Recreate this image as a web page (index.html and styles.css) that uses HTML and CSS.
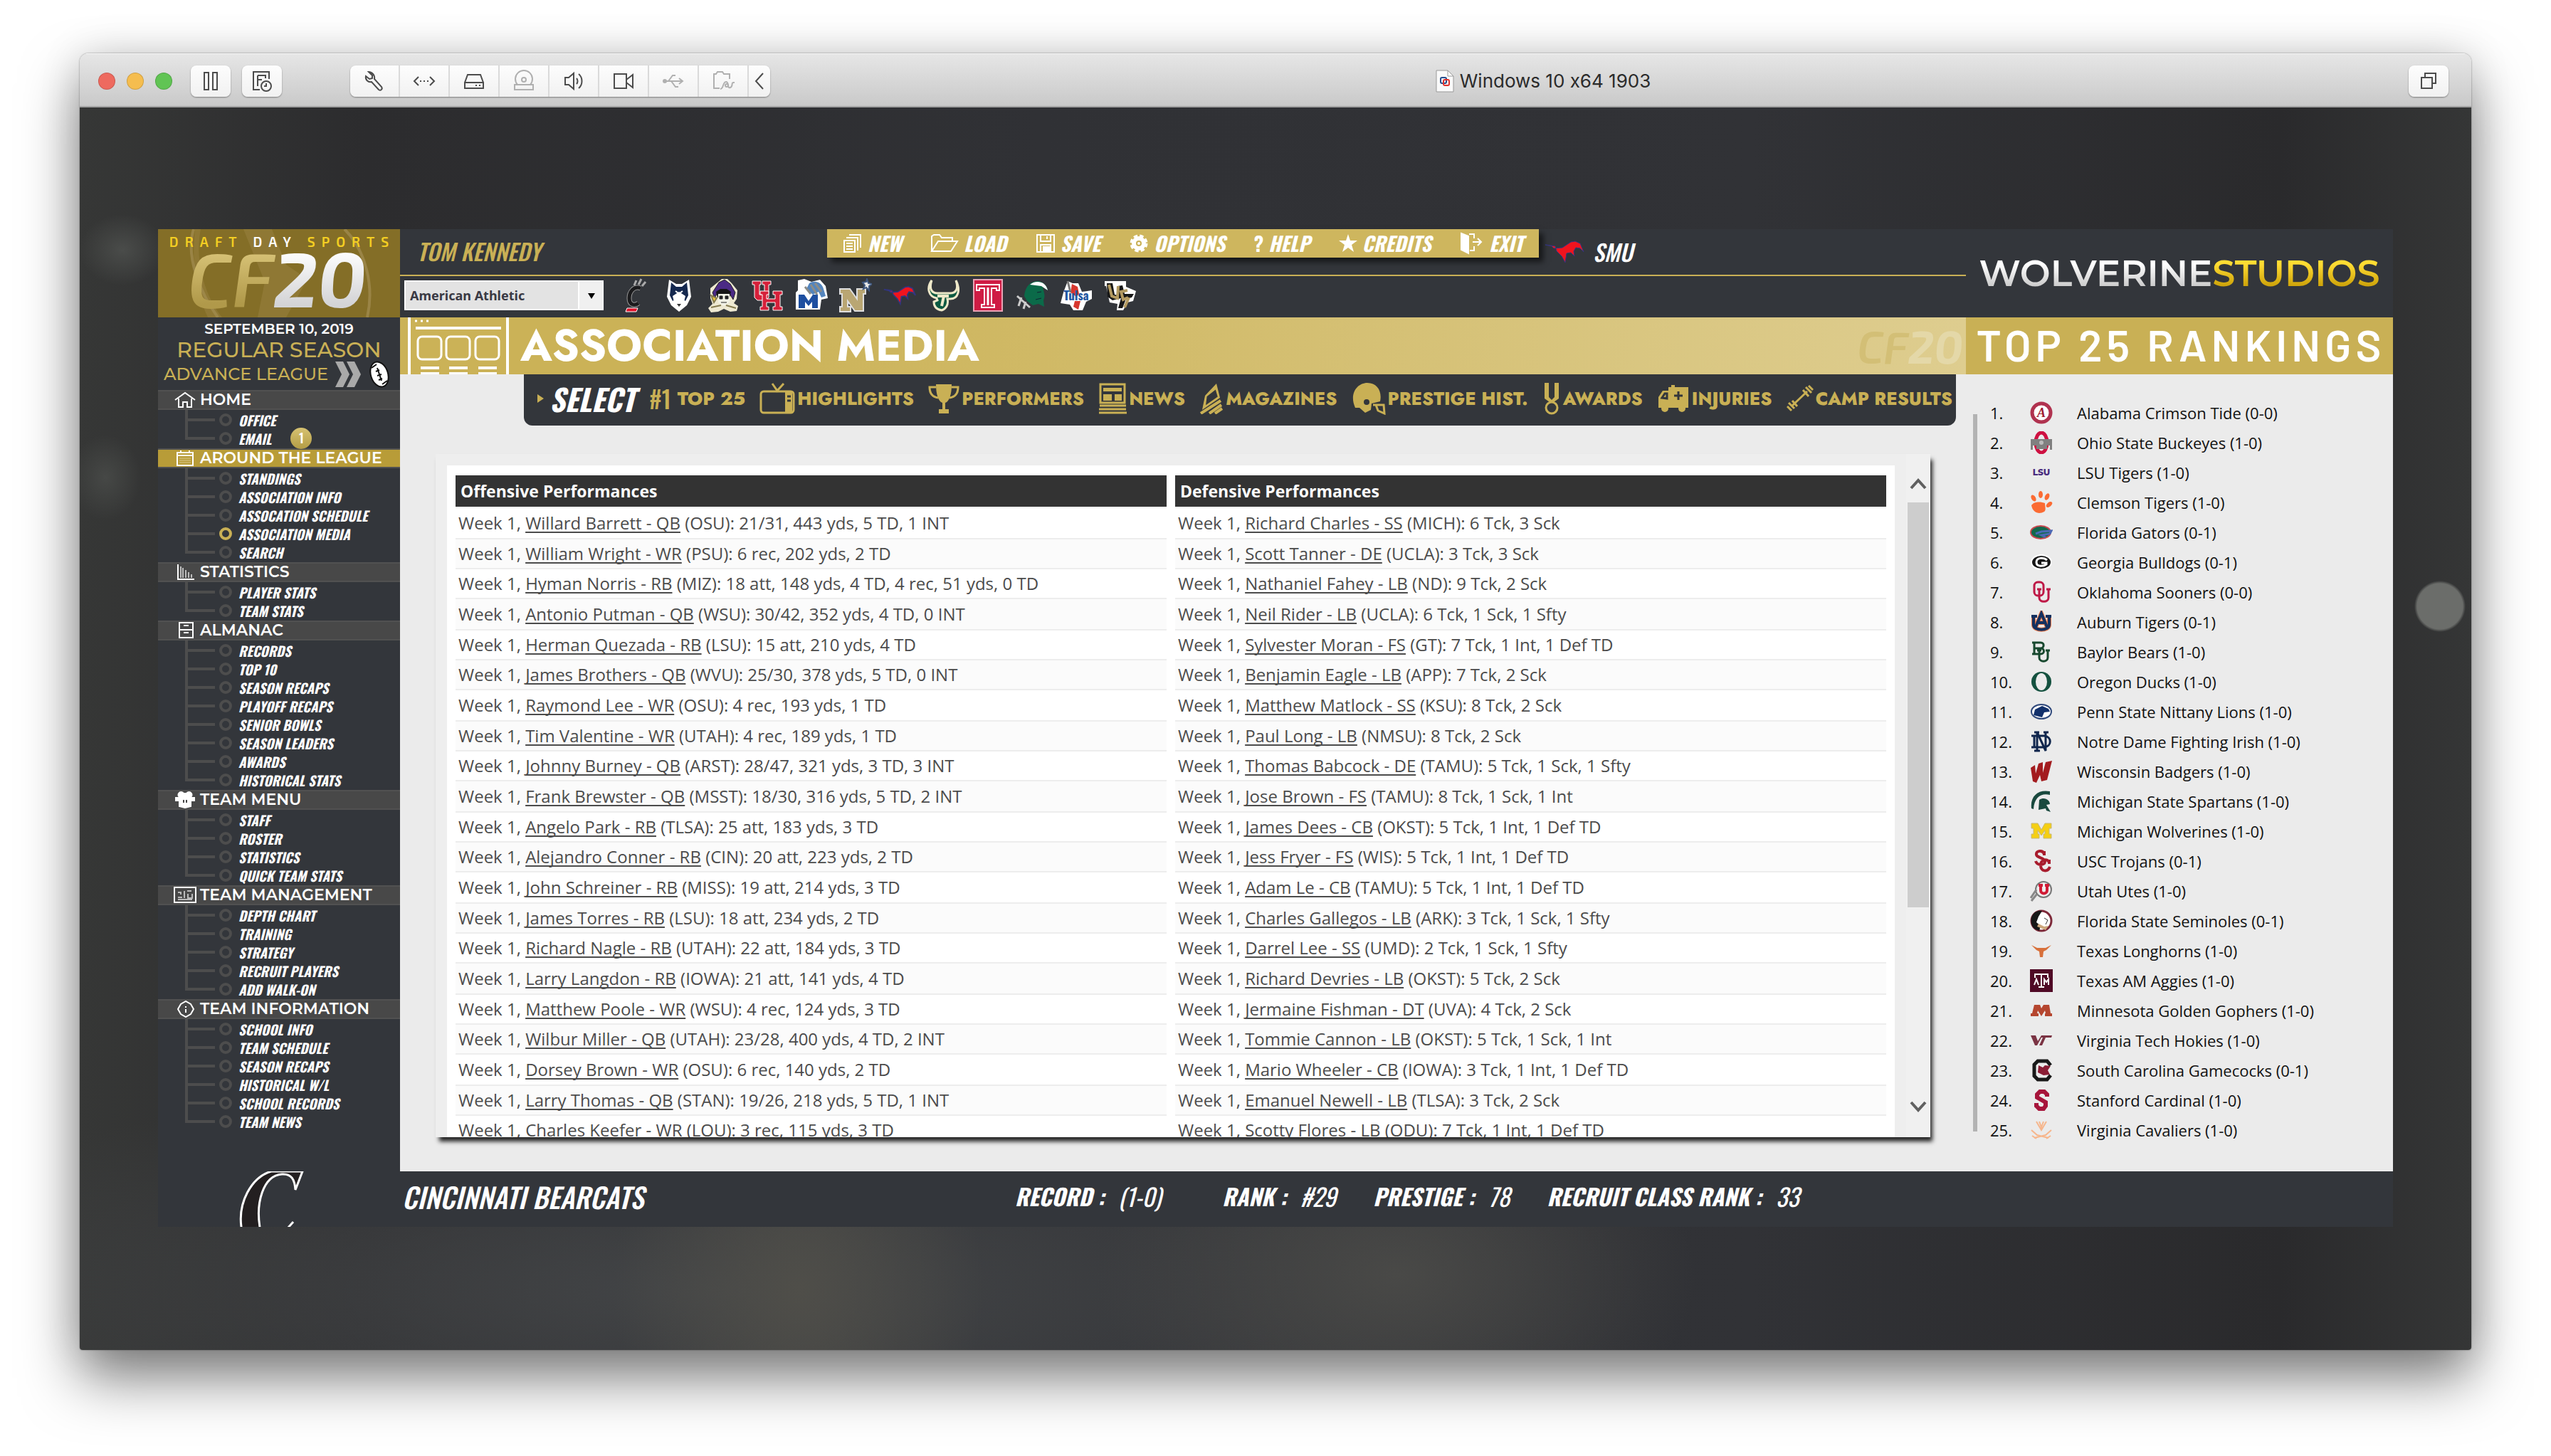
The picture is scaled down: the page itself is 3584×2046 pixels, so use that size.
FILE: index.html
```html
<!DOCTYPE html>
<html lang="en">
<head>
<meta charset="utf-8">
<title>Windows 10 x64 1903</title>
<link rel="stylesheet" href="styles.css">
</head>
<body>
<div class="window">
<header class="titlebar">
  <div class="lights"><button class="light red" aria-label="Close"></button><button class="light amber" aria-label="Minimise"></button><button class="light green" aria-label="Zoom"></button></div>
  <button class="tool" aria-label="Pause"><svg width="32" height="32" viewBox="0 0 32 32"><path d="M7 4h6v24H7zM19 4h6v24h-6z"/></svg></button>
  <button class="tool" aria-label="Snapshots"><svg width="34" height="34" viewBox="0 0 34 34"><path d="M14 29H5V4h22v10M11 9h11v4M11 9v15M11 15h6"/><circle cx="23" cy="24" r="7"/><path d="M23 20v4h-3"/></svg></button>
  <div class="toolgroup">
    <button aria-label="Settings"><svg width="34" height="34" viewBox="0 0 34 34"><path d="M9 4l5 5v4l-4 1-5-4c-1 5 3 9 8 8l10 11c3 2 6-1 4-4L17 14c1-5-3-10-8-10z"/></svg></button>
    <button aria-label="Network"><svg width="34" height="34" viewBox="0 0 34 34"><path d="M9 11l-6 6 6 6M25 11l6 6-6 6M11 17h2M16 17h2M21 17h2"/></svg></button>
    <button aria-label="Hard disk"><svg width="34" height="34" viewBox="0 0 34 34"><path d="M4 19l4-11h18l4 11M4 19h26v8H4zM19 23h2M24 23h2"/></svg></button>
    <button class="off" aria-label="CD drive"><svg width="34" height="34" viewBox="0 0 34 34"><path d="M8 22a12 12 0 1 1 18 0M4 22h26v7H4z"/><circle cx="17" cy="15" r="3"/></svg></button>
    <button aria-label="Sound"><svg width="34" height="34" viewBox="0 0 34 34"><path d="M5 12h5l7-6v22l-7-6H5zM21 13c2 2 2 6 0 8M24 7c6 5 6 15 0 20"/></svg></button>
    <button aria-label="Camera"><svg width="34" height="34" viewBox="0 0 34 34"><path d="M4 7h17v20H4zM21 15l9-7v18l-9-7"/></svg></button>
    <button class="off" aria-label="USB"><svg width="34" height="34" viewBox="0 0 34 34"><path d="M4 17h25M25 13l5 4-5 4M10 17l6-8h4M14 17l6 8h4"/><circle cx="5" cy="17" r="2"/></svg></button>
    <button class="off" aria-label="Shared folders"><svg width="34" height="34" viewBox="0 0 34 34"><path d="M12 27H4V7h3l2-3h7l2 3h8v7M13 28c5 0 3-10 8-10s1 10 6 8 0-8 6-7"/><circle cx="22" cy="23" r="2"/></svg></button>
    <button class="last" aria-label="Collapse"><svg width="20" height="34" viewBox="0 0 20 34"><path d="M15 6L5 17l10 11"/></svg></button>
  </div>
  <div class="wintitle"><svg width="26" height="32" viewBox="0 0 26 32"><path d="M1 1h16l8 8v22H1z" fill="#fafafa" stroke="#999" stroke-width="1"/><path d="M17 1v8h8z" fill="#fff" stroke="#999"/><rect x="7" y="11" width="8" height="8" rx="2" fill="none" stroke="#274e8f" stroke-width="2"/><rect x="11" y="14" width="8" height="8" rx="2" fill="none" stroke="#e0322c" stroke-width="2"/></svg><span>Windows 10 x64 1903</span></div>
  <button class="tool" aria-label="Unity"><svg width="32" height="32" viewBox="0 0 32 32"><path d="M11 10V5h15v14h-5M6 11h15v15H6z"/></svg></button>
</header>
<div class="screen">
<div class="app">
<div class="brand">
  <svg class="brandart" viewBox="0 0 340 124" preserveAspectRatio="none"><path d="M50 0C38 40 60 90 84 124M262 0c30 30 42 80 32 124" fill="none" stroke="#a8935a" stroke-width="4" opacity=".6"/><path d="M60 0c-10 50 10 100 30 124h-20C50 80 48 40 52 0zM120 0h40l20 50 30 20-30 54h-40l10-50z" fill="#a38d4c" opacity=".35"/></svg>
  <div class="tagline">DRAFT <b>DAY</b> SPORTS</div>
  <div class="cf"><span class="cfa">CF</span><span class="cfb">20</span></div>
</div>
<aside class="sidebar">
  <div class="season">
    <div class="date">SEPTEMBER 10, 2019</div>
    <div class="phase">REGULAR SEASON</div>
    <a class="advance" href="#">ADVANCE LEAGUE <svg width="36" height="36" viewBox="0 0 36 36"><path d="M0 0h11l9 18-9 18H0l9-18zM16 0h11l9 18-9 18H16l9-18z" fill="#a9a9a9"/></svg><svg width="34" height="40" viewBox="0 0 34 40"><ellipse cx="17" cy="20" rx="12" ry="18" transform="rotate(-18 17 20)" fill="#fff" stroke="#111" stroke-width="2"/><path d="M14 11l6 18M12 16l5-2M14 22l6-2M16 28l5-2M6 11l7-5M21 34l7-5" stroke="#111" stroke-width="2"/></svg></a>
  </div>
  <nav>
    <h2><svg width="32" height="24" viewBox="0 0 32 24"><path d="M2 12L16 2l14 10M7 10v12h6v-7h6v7h6V10"/></svg>HOME</h2>
    <ul><li><a href="#">OFFICE</a></li><li><a href="#">EMAIL<span class="badge">1</span></a></li></ul>
    <h2 class="on"><svg width="32" height="24" viewBox="0 0 32 24"><path d="M5 4h22v18H5zM5 8h22M10 1v4M22 1v4" /><path d="M8 12h16M8 15h16M8 18h16" stroke="#dccb93" stroke-width="1"/></svg>AROUND THE LEAGUE</h2>
    <ul><li><a href="#">STANDINGS</a></li><li><a href="#">ASSOCIATION INFO</a></li><li><a href="#">ASSOCATION SCHEDULE</a></li><li><a class="cur" href="#">ASSOCIATION MEDIA</a></li><li><a href="#">SEARCH</a></li></ul>
    <h2><svg width="32" height="24" viewBox="0 0 32 24"><path d="M6 1v21h23"/><path d="M10 4v16M13 6v14M17 9v11M21 12v8M25 15v5" stroke="#bbb"/></svg>STATISTICS</h2>
    <ul><li><a href="#">PLAYER STATS</a></li><li><a href="#">TEAM STATS</a></li></ul>
    <h2><svg width="32" height="24" viewBox="0 0 32 24"><path d="M8 1h19v21H8zM8 11h19M14 5h7M14 15h7"/></svg>ALMANAC</h2>
    <ul><li><a href="#">RECORDS</a></li><li><a href="#">TOP 10</a></li><li><a href="#">SEASON RECAPS</a></li><li><a href="#">PLAYOFF RECAPS</a></li><li><a href="#">SENIOR BOWLS</a></li><li><a href="#">SEASON LEADERS</a></li><li><a href="#">AWARDS</a></li><li><a href="#">HISTORICAL STATS</a></li></ul>
    <h2><svg width="32" height="24" viewBox="0 0 32 24"><path fill="#fff" d="M10 9a4 4 0 1 1 4-6h4a4 4 0 1 1 4 6h7v4h-5v8l-8 2-8-2v-8H3V9z"/><path d="M14 12v4M18 12v4" stroke="#484848"/></svg>TEAM MENU</h2>
    <ul><li><a href="#">STAFF</a></li><li><a href="#">ROSTER</a></li><li><a href="#">STATISTICS</a></li><li><a href="#">QUICK TEAM STATS</a></li></ul>
    <h2><svg width="32" height="24" viewBox="0 0 32 24"><path d="M1 1h30v21H1z"/><path d="M6 8h4v3M15 6v10M6 15h6M19 6h6M20 10v6h6v-6M6 18h20" stroke="#bbb"/></svg>TEAM MANAGEMENT</h2>
    <ul><li><a href="#">DEPTH CHART</a></li><li><a href="#">TRAINING</a></li><li><a href="#">STRATEGY</a></li><li><a href="#">RECRUIT PLAYERS</a></li><li><a href="#">ADD WALK-ON</a></li></ul>
    <h2><svg width="32" height="24" viewBox="0 0 32 24"><path d="M6 12l4-7 7-4 7 4 4 7-4 7-7 4-7-4zM17 8v2M17 12v5"/></svg>TEAM INFORMATION</h2>
    <ul><li><a href="#">SCHOOL INFO</a></li><li><a href="#">TEAM SCHEDULE</a></li><li><a href="#">SEASON RECAPS</a></li><li><a href="#">HISTORICAL W/L</a></li><li><a href="#">SCHOOL RECORDS</a></li><li><a href="#">TEAM NEWS</a></li></ul>
  </nav>
  <svg class="teamlogo" width="94" height="78" viewBox="0 0 94 78"><path d="M45 0C18 8-4 44 4 84h26C22 44 34 6 60 4c14-1 18 8 19 22l10-26z" fill="#231f20" stroke="#fff" stroke-width="3"/><path d="M68 80l8-9" stroke="#fff" stroke-width="3"/></svg>
</aside>
<section class="top">
  <div class="toprow">
    <div class="manager">TOM KENNEDY</div>
    <nav class="menu">
      <button><svg width="28" height="28" viewBox="0 0 28 28"><path d="M9 2h16v18M5 6h16v18M2 10h15v16H2zM5 14h9M5 18h9M5 22h9"/></svg>NEW</button>
      <button><svg width="40" height="28" viewBox="0 0 40 28"><path d="M2 25V4l3-2h8l3 4h15v5M2 25L11 11h27l-9 14z"/></svg>LOAD</button>
      <button><svg width="28" height="28" viewBox="0 0 28 28"><path d="M2 2h24v24H2zM7 2v9h14V2M7 26V16h14v10M16 4v4"/><path fill="#fff" d="M11 19h8v7h-8z"/></svg>SAVE</button>
      <button><svg width="28" height="28" viewBox="0 0 28 28"><path d="M14 5a9 9 0 1 1 0 18 9 9 0 0 1 0-18z" fill="#fff"/><circle cx="14" cy="14" r="10" stroke-width="5" stroke-dasharray="5 3"/><circle cx="14" cy="14" r="3" stroke="#c9b055"/></svg>OPTIONS</button>
      <button><b>?</b>HELP</button>
      <button><svg width="26" height="26" viewBox="0 0 26 26"><path fill="#fff" stroke="none" d="M13 0l3 9h10l-8 6 3 10-8-6-8 6 3-10-8-6h10z"/></svg>CREDITS</button>
      <button><svg width="34" height="32" viewBox="0 0 34 32"><path d="M13 3h7v6M20 20v6h-6M18 14h12M25 9l5 5-5 5"/><path fill="#fff" d="M2 2l10 4v24L2 25z"/></svg>EXIT</button>
    </nav>
    <div class="opponent"><svg width="56" height="36" viewBox="0 0 56 36"><path d="M1 8l9 2 3 3 12-1 12-8 6-1 7 3 5 12-5-5-6-1-3 5 1 7-5-5-6 1-2 13-5-9-7-7-2-7-6-1z" fill="#f0141e" stroke="#31357f" stroke-width="1"/></svg>SMU</div>
  </div>
  <div class="schools">
    <label class="sr" for="conf">Conference</label>
    <select id="conf"><option>American Athletic</option></select>
    <a href="#" aria-label="Cincinnati"><svg width="44" height="48" viewBox="0 0 44 48"><path d="M30 14c-10-4-16 6-16 14 0 10 8 11 13 7" fill="none" stroke="#999" stroke-width="7"/><path d="M30 14c-10-4-16 6-16 14 0 10 8 11 13 7" fill="none" stroke="#1b1b1d" stroke-width="5"/><path d="M21 10l3-7M27 9l4-8M32 11l5-6" stroke="#aaa" stroke-width="3"/><path d="M11 42h15l-2 5H9z" fill="#e0122a" stroke="#fff" stroke-width="1"/></svg></a>
    <a href="#" aria-label="Connecticut"><svg width="44" height="48" viewBox="0 0 44 48"><path d="M8 2l10 6h8l10-6 3 24-6 12-11 9-11-9-6-12z" fill="#fff"/><path d="M11 6l7 6h8l7-6 2 18-4 8-9-6-9 6-4-8z" fill="#14284f"/><path d="M13 25l9-6 9 6-3 12-6 7-6-7z" fill="#fff"/><path d="M19 36h6l-3 4z" fill="#333"/><path d="M17 18l4 3M27 18l-4 3" stroke="#fff" stroke-width="2"/></svg></a>
    <a href="#" aria-label="East Carolina"><svg width="44" height="48" viewBox="0 0 44 48"><path d="M4 14L14 6 20 1l8 0 6 6 8 10-1 12-4 6 6 4-2 7-9 1-9-4-8 4-10 1-4-6 6-6-3-8z" fill="#eee9d2"/><path d="M7 20l9-14 8-4 8 6 7 12-3 10-6-10H14l-4 8z" fill="#4b2a85" stroke="#222"/><path d="M12 19l6-4h9l6 4-2 8H14z" fill="#151515"/><path d="M15 22h16v12l-8 5-8-5z" fill="#f2f2e6"/><path d="M17 25h4v4h-4zM25 25h4v4h-4zM19 34h8" fill="#222" stroke="#222"/><path d="M5 24l4 10 4-6zM5 41l14-3M26 38l14 4" fill="#f1c83a" stroke="#857b50" stroke-width="2"/></svg></a>
    <a href="#" aria-label="Houston"><svg width="44" height="48" viewBox="0 0 44 48"><g fill="#d6203a" stroke="#fff" stroke-width="1"><path d="M1 4h12v5h-2v14h7V9h-3V4h12v5h-3v18l-4 4H8l-4-4V9H1z"/><path d="M12 18h12v5h-3v6h12v-6h-3v-5h13v5h-3v17h3v5H30v-5h3v-6H21v6h3v5H12v-5h3V23h-3z"/></g></svg></a>
    <a href="#" aria-label="Memphis"><svg width="46" height="48" viewBox="0 0 46 48"><path d="M4 3l9-2 10 4 12-3 8 9 3 17-9 2-2 14H1V20l3-3z" fill="#fff"/><path d="M5 23h8l6 9 6-9h7v19h-8v-9l-5 6-5-6v9H5z" fill="#1e4fa0"/><path d="M20 7c8-5 18-1 20 8l3 10-6 2-4-8-8 4-9-8z" fill="#5485bd"/><path d="M14 12l8 10M22 9l9 14M28 7l9 12" stroke="#8b8c88" stroke-width="3"/></svg></a>
    <a href="#" aria-label="Navy"><svg width="46" height="48" viewBox="0 0 46 48"><path d="M1 15h14l10 14V15h12v7h-3v24H22L12 32v8h4v7H1v-7h3V22H1z" fill="#b9a673" stroke="#dedede" stroke-width="2"/><path d="M39 1l2 6 5 1-4 3v6l-4-4-4 2 2-5-3-4 5-1z" fill="#e6e6e6" stroke="#3e577f" stroke-width="2"/></svg></a>
    <a href="#" aria-label="SMU"><svg width="46" height="32" viewBox="0 0 56 36"><path d="M1 8l9 2 3 3 12-1 12-8 6-1 7 3 5 12-5-5-6-1-3 5 1 7-5-5-6 1-2 13-5-9-7-7-2-7-6-1z" fill="#f0141e" stroke="#31357f" stroke-width="2"/></svg></a>
    <a href="#" aria-label="South Florida"><svg width="46" height="48" viewBox="0 0 46 48"><path d="M6 3c-4 12 0 18 8 18h18c8 0 12-6 8-18 7 14 3 26-8 26h-4c2 8-2 14-8 16-7-1-11-5-11-12l5-2-1-3C2 26-2 14 6 3z" fill="#0b5a41" stroke="#efe9ca" stroke-width="3"/><path d="M14 25h16M23 25l-3 14" stroke="#efe9ca" stroke-width="4"/></svg></a>
    <a href="#" aria-label="Temple"><svg width="42" height="46" viewBox="0 0 42 46"><path d="M1 1h40v44H1z" fill="#cf1b44" stroke="#e8a2b4" stroke-width="2"/><path d="M5 16V8h32v8h-4v-3h-7v23h4v4H12v-4h4V13H9v3z" fill="#cf1b44" stroke="#fff" stroke-width="2"/><path d="M21 12v25" stroke="#fff" stroke-width="3"/></svg></a>
    <a href="#" aria-label="Tulane"><svg width="46" height="42" viewBox="0 0 46 42"><path d="M12 22C14 6 22 2 30 1c8 0 14 6 15 13l-7-4c2 8 4 12 1 18l1 9-8-4-8 2-8-6z" fill="#0b6a49"/><path d="M20 6C26 0 42-1 45 14L36 8z" fill="#fff"/><path d="M30 17l6-1M28 27l8-2" stroke="#123"/><path d="M2 22l18 16M8 24l-4 12M14 30l-3 10" stroke="#ccc" stroke-width="3"/></svg></a>
    <a href="#" aria-label="Tulsa"><svg width="48" height="44" viewBox="0 0 48 44"><path d="M12 2l7 3 8 0 5 12 14-2v12l-8 4-5 12H20l-5-8-13-2 4-15z" fill="#fff"/><path d="M18 6l8 4 2 10-4 4-8-6zM22 30h8l-3 12-7-4z" fill="#d7372f"/><path d="M12 2l4 16" stroke="#777" stroke-width="3"/><text x="24" y="29" text-anchor="middle" class="lg" font-size="17" fill="#2457a0">Tulsa</text></svg></a>
    <a href="#" aria-label="UCF"><svg width="48" height="44" viewBox="0 0 48 44"><path d="M2 2h30v8l14 6-4 14-8 2-6 11h-9l1-9-11-2L4 9H2z" fill="#fff"/><path d="M5 5h8l3 16 6 1-2-13 7-1 3 12 13 0-3 5-8 2-5 13h-6l4-14-12 3-7-5z" fill="#171717"/><path d="M8 7l4 16 8 3 1-17M34 15l-9 2 3 11 7-3M36 25l-6 14" fill="none" stroke="#b39a61" stroke-width="4"/></svg></a>
  </div>
</section>
<div class="studio"><span class="wol">WOLVERINE</span><span class="stu">STUDIOS</span></div>
<div class="band">
  <svg width="142" height="80" viewBox="0 0 142 80" fill="none" stroke="#fff" stroke-width="4"><path d="M2 0v80M140 0v80M11 15h120"/><path d="M10 5h3M18 5h3M26 5h3" stroke-width="3"/><rect x="14" y="27" width="33" height="32" rx="6" stroke-width="3"/><rect x="54" y="27" width="33" height="32" rx="6" stroke-width="3"/><rect x="95" y="27" width="33" height="32" rx="6" stroke-width="3"/><path d="M18 71h26M18 79h26M58 71h26M58 79h26M99 71h26M99 79h26"/></svg>
  <h1>ASSOCIATION MEDIA</h1>
  <span class="ghost">CF<b>20</b></span>
</div>
<h2 class="rtitle">TOP 25 RANKINGS</h2>
<main class="main">
  <nav class="tabs">
    <span class="select"><i></i>SELECT</span>
    <a class="top25" href="#"><span class="num">#1</span> TOP 25</a>
    <a href="#"><svg width="50" height="46" viewBox="0 0 50 46"><rect x="2" y="13" width="46" height="30" rx="4"/><path d="M18 2l7 10 9-10"/><path class="f" d="M36 14h10v28H36z"/><path d="M39 20h5M39 26h5" stroke="#33363b"/></svg>HIGHLIGHTS</a>
    <a href="#"><svg width="44" height="44" viewBox="0 0 44 44"><path class="f" d="M11 2h22c0 14-3 24-9 26v9h5v6H15v-6h5v-9C14 26 11 16 11 2z"/><path d="M11 6H2c0 10 5 14 12 15M33 6h9c0 10-5 14-12 15"/></svg>PERFORMERS</a>
    <a href="#"><svg width="40" height="44" viewBox="0 0 40 44"><path d="M3 2h34v26H3zM2 32h37M1 37h38M1 42h39"/><path class="f" d="M7 7h26v5H7zM7 16h12v9H7zM23 16h10v9H23z"/></svg>NEWS</a>
    <a href="#"><svg width="34" height="44" viewBox="0 0 34 44"><path class="f" d="M24 1l5 20L4 38l4-20z"/><path d="M12 20l10-8 2 7-13 9z" fill="#33363b" stroke="#33363b"/><path d="M2 43l28-18M14 43l17-12M22 43l10-7" stroke-width="4"/></svg>MAGAZINES</a>
    <a href="#"><svg width="48" height="46" viewBox="0 0 48 46"><path class="f" d="M5 36C-4 16 8 1 22 1c14 0 21 12 18 26l-12 3-1 9-8 4-8-7z"/><circle cx="21" cy="28" r="4" fill="#33363b" stroke="none"/><path d="M30 32h15l1 12-9-4-3-8"/></svg>PRESTIGE HIST.</a>
    <a href="#"><svg width="26" height="46" viewBox="0 0 26 46"><path class="f" d="M3 1h6v20l4 4 4-4V1h6v22l-7 5h-6l-7-5z"/><circle cx="13" cy="36" r="8"/></svg>AWARDS</a>
    <a href="#"><svg width="46" height="40" viewBox="0 0 46 40"><path class="f" d="M16 4h4V1h5v3h19v29H2V18l6-9h8z"/><path d="M30 10v12M24 16h12M7 19l4-6h3v7z" stroke="#33363b"/><circle class="f" cx="11" cy="34" r="5"/><circle class="f" cx="35" cy="34" r="5"/></svg>INJURIES</a>
    <a href="#"><svg width="38" height="38" viewBox="0 0 38 38"><path d="M8 29L29 9M3 25l8 8M1 30l6 6M8 22l7 8M23 7l8 9M27 3l8 8M31 1l6 6"/></svg>CAMP RESULTS</a>
  </nav>
  <div class="frame">
    <div class="sheet">
      <table>
        <thead><tr><th scope="col">Offensive Performances</th></tr></thead>
        <tbody>
        <tr><td>Week 1, <a href="#">Willard Barrett - QB</a> (OSU): 21/31, 443 yds, 5 TD, 1 INT</td></tr>
        <tr><td>Week 1, <a href="#">William Wright - WR</a> (PSU): 6 rec, 202 yds, 2 TD</td></tr>
        <tr><td>Week 1, <a href="#">Hyman Norris - RB</a> (MIZ): 18 att, 148 yds, 4 TD, 4 rec, 51 yds, 0 TD</td></tr>
        <tr><td>Week 1, <a href="#">Antonio Putman - QB</a> (WSU): 30/42, 352 yds, 4 TD, 0 INT</td></tr>
        <tr><td>Week 1, <a href="#">Herman Quezada - RB</a> (LSU): 15 att, 210 yds, 4 TD</td></tr>
        <tr><td>Week 1, <a href="#">James Brothers - QB</a> (WVU): 25/30, 378 yds, 5 TD, 0 INT</td></tr>
        <tr><td>Week 1, <a href="#">Raymond Lee - WR</a> (OSU): 4 rec, 193 yds, 1 TD</td></tr>
        <tr><td>Week 1, <a href="#">Tim Valentine - WR</a> (UTAH): 4 rec, 189 yds, 1 TD</td></tr>
        <tr><td>Week 1, <a href="#">Johnny Burney - QB</a> (ARST): 28/47, 321 yds, 3 TD, 3 INT</td></tr>
        <tr><td>Week 1, <a href="#">Frank Brewster - QB</a> (MSST): 18/30, 316 yds, 5 TD, 2 INT</td></tr>
        <tr><td>Week 1, <a href="#">Angelo Park - RB</a> (TLSA): 25 att, 183 yds, 3 TD</td></tr>
        <tr><td>Week 1, <a href="#">Alejandro Conner - RB</a> (CIN): 20 att, 223 yds, 2 TD</td></tr>
        <tr><td>Week 1, <a href="#">John Schreiner - RB</a> (MISS): 19 att, 214 yds, 3 TD</td></tr>
        <tr><td>Week 1, <a href="#">James Torres - RB</a> (LSU): 18 att, 234 yds, 2 TD</td></tr>
        <tr><td>Week 1, <a href="#">Richard Nagle - RB</a> (UTAH): 22 att, 184 yds, 3 TD</td></tr>
        <tr><td>Week 1, <a href="#">Larry Langdon - RB</a> (IOWA): 21 att, 141 yds, 4 TD</td></tr>
        <tr><td>Week 1, <a href="#">Matthew Poole - WR</a> (WSU): 4 rec, 124 yds, 3 TD</td></tr>
        <tr><td>Week 1, <a href="#">Wilbur Miller - QB</a> (UTAH): 23/28, 400 yds, 4 TD, 2 INT</td></tr>
        <tr><td>Week 1, <a href="#">Dorsey Brown - WR</a> (OSU): 6 rec, 140 yds, 2 TD</td></tr>
        <tr><td>Week 1, <a href="#">Larry Thomas - QB</a> (STAN): 19/26, 218 yds, 5 TD, 1 INT</td></tr>
        <tr><td>Week 1, <a href="#">Charles Keefer - WR</a> (LOU): 3 rec, 115 yds, 3 TD</td></tr>
        </tbody>
      </table>
      <table>
        <thead><tr><th scope="col">Defensive Performances</th></tr></thead>
        <tbody>
        <tr><td>Week 1, <a href="#">Richard Charles - SS</a> (MICH): 6 Tck, 3 Sck</td></tr>
        <tr><td>Week 1, <a href="#">Scott Tanner - DE</a> (UCLA): 3 Tck, 3 Sck</td></tr>
        <tr><td>Week 1, <a href="#">Nathaniel Fahey - LB</a> (ND): 9 Tck, 2 Sck</td></tr>
        <tr><td>Week 1, <a href="#">Neil Rider - LB</a> (UCLA): 6 Tck, 1 Sck, 1 Sfty</td></tr>
        <tr><td>Week 1, <a href="#">Sylvester Moran - FS</a> (GT): 7 Tck, 1 Int, 1 Def TD</td></tr>
        <tr><td>Week 1, <a href="#">Benjamin Eagle - LB</a> (APP): 7 Tck, 2 Sck</td></tr>
        <tr><td>Week 1, <a href="#">Matthew Matlock - SS</a> (KSU): 8 Tck, 2 Sck</td></tr>
        <tr><td>Week 1, <a href="#">Paul Long - LB</a> (NMSU): 8 Tck, 2 Sck</td></tr>
        <tr><td>Week 1, <a href="#">Thomas Babcock - DE</a> (TAMU): 5 Tck, 1 Sck, 1 Sfty</td></tr>
        <tr><td>Week 1, <a href="#">Jose Brown - FS</a> (TAMU): 8 Tck, 1 Sck, 1 Int</td></tr>
        <tr><td>Week 1, <a href="#">James Dees - CB</a> (OKST): 5 Tck, 1 Int, 1 Def TD</td></tr>
        <tr><td>Week 1, <a href="#">Jess Fryer - FS</a> (WIS): 5 Tck, 1 Int, 1 Def TD</td></tr>
        <tr><td>Week 1, <a href="#">Adam Le - CB</a> (TAMU): 5 Tck, 1 Int, 1 Def TD</td></tr>
        <tr><td>Week 1, <a href="#">Charles Gallegos - LB</a> (ARK): 3 Tck, 1 Sck, 1 Sfty</td></tr>
        <tr><td>Week 1, <a href="#">Darrel Lee - SS</a> (UMD): 2 Tck, 1 Sck, 1 Sfty</td></tr>
        <tr><td>Week 1, <a href="#">Richard Devries - LB</a> (OKST): 5 Tck, 2 Sck</td></tr>
        <tr><td>Week 1, <a href="#">Jermaine Fishman - DT</a> (UVA): 4 Tck, 2 Sck</td></tr>
        <tr><td>Week 1, <a href="#">Tommie Cannon - LB</a> (OKST): 5 Tck, 1 Sck, 1 Int</td></tr>
        <tr><td>Week 1, <a href="#">Mario Wheeler - CB</a> (IOWA): 3 Tck, 1 Int, 1 Def TD</td></tr>
        <tr><td>Week 1, <a href="#">Emanuel Newell - LB</a> (TLSA): 3 Tck, 2 Sck</td></tr>
        <tr><td>Week 1, <a href="#">Scotty Flores - LB</a> (ODU): 7 Tck, 1 Int, 1 Def TD</td></tr>
        </tbody>
      </table>
    </div>
    <div class="scroll">
      <button aria-label="Scroll up"><svg width="24" height="20" viewBox="0 0 24 20"><path d="M2 16L12 5l10 11"/></svg></button>
      <div class="track"><div class="thumb"></div></div>
      <button aria-label="Scroll down"><svg width="24" height="20" viewBox="0 0 24 20"><path d="M2 4l10 11L22 4"/></svg></button>
    </div>
  </div>
</main>
<section class="ranks">
<ol>
<li><span>1.</span><svg viewBox="0 0 32 32"><circle cx="16" cy="16" r="13" fill="#fff" stroke="#b0324f" stroke-width="5"/><text x="16" y="22" class="li" font-size="18" fill="#9e1b32">A</text></svg>Alabama Crimson Tide (0-0)</li>
<li><span>2.</span><svg viewBox="0 0 32 32"><ellipse cx="16" cy="16" rx="8" ry="14" fill="none" stroke="#ce1141" stroke-width="5"/><path d="M1 11h30v15h-3v-6h-4v5H9v-5H4v6H1z" fill="#808080"/><circle cx="16" cy="16" r="3" fill="#bbb"/></svg>Ohio State Buckeyes (1-0)</li>
<li><span>3.</span><svg viewBox="0 0 32 32"><text x="16" y="20" class="lw" font-size="12" fill="#4a2d7f">LSU</text></svg>LSU Tigers (1-0)</li>
<li><span>4.</span><svg viewBox="0 0 32 32" fill="#fb6b33"><ellipse cx="5" cy="10" rx="3" ry="5" transform="rotate(-30 5 10)"/><ellipse cx="15" cy="5" rx="3" ry="5"/><ellipse cx="24" cy="8" rx="3" ry="5" transform="rotate(25 24 8)"/><ellipse cx="27" cy="19" rx="3" ry="5" transform="rotate(50 27 19)"/><path d="M2 20c4-6 14-5 19-3 0 4 2 10-1 12-7 4-16 2-18-9z"/></svg>Clemson Tigers (1-0)</li>
<li><span>5.</span><svg viewBox="0 0 32 32"><ellipse cx="15" cy="16" rx="14" ry="9" fill="#12684c" stroke="#c8484f" stroke-width="2"/><path d="M8 18l8-3 14-1-2 4-12 2 6 3" fill="none" stroke="#4a69b5" stroke-width="3"/></svg>Florida Gators (0-1)</li>
<li><span>6.</span><svg viewBox="0 0 32 32"><ellipse cx="16" cy="16" rx="14" ry="10" fill="#151515" stroke="#fff" stroke-width="2"/><path d="M24 13c-5-4-15-4-15 3s10 6 14 3v-2h-7" fill="none" stroke="#fff" stroke-width="3"/></svg>Georgia Bulldogs (0-1)</li>
<li><span>7.</span><svg viewBox="0 0 32 32" fill="none" stroke="#be1846" stroke-width="3"><rect x="6" y="2" width="13" height="19" rx="5"/><path d="M13 11v13c0 7 13 7 13 0V11M10 12h6M23 12h6"/></svg>Oklahoma Sooners (0-0)</li>
<li><span>8.</span><svg viewBox="0 0 32 32" fill="none" stroke="#e2774a" stroke-width="6"><path d="M5 8v12c0 9 22 9 22 0V8M8 23L16 4l8 19M10 17h12"/><path stroke="#14305f" stroke-width="4" d="M5 8v12c0 9 22 9 22 0V8M8 23L16 4l8 19M10 17h12M2 8h8M22 8h8"/></svg>Auburn Tigers (0-1)</li>
<li><span>9.</span><svg viewBox="0 0 32 32" fill="none" stroke="#17482e" stroke-width="3"><path d="M3 3h12c6 0 5 8 0 8 6 0 6 8 0 8H3M6 3v16M6 11h9M13 14v10c0 7 12 7 12 0V14M10 14h6M22 14h6"/></svg>Baylor Bears (1-0)</li>
<li><span>10.</span><svg viewBox="0 0 32 32"><ellipse cx="16" cy="16" rx="14" ry="14" fill="#14513f"/><ellipse cx="16" cy="16" rx="8" ry="12" fill="#ebebeb"/></svg>Oregon Ducks (1-0)</li>
<li><span>11.</span><svg viewBox="0 0 32 32"><ellipse cx="16" cy="16" rx="14" ry="10" fill="#fff" stroke="#30497c" stroke-width="2"/><path d="M5 21l2-8 10-5 9 4 2 4-8 1-3 7z" fill="#12306b"/></svg>Penn State Nittany Lions (1-0)</li>
<li><span>12.</span><svg viewBox="0 0 32 32" fill="none" stroke="#10264d" stroke-width="3"><path d="M2 8h18c11 1 11 15 0 16H2M6 8v16M10 29V3l12 26V3M6 3h7M19 3h7M6 29h8"/></svg>Notre Dame Fighting Irish (1-0)</li>
<li><span>13.</span><svg viewBox="0 0 32 32"><path d="M1 11l6-4 1 12 4-14 6-2v15l4-15 9-2-7 27-8 2-2-9-5 11-5-2z" fill="#a31c1f"/></svg>Wisconsin Badgers (1-0)</li>
<li><span>14.</span><svg viewBox="0 0 32 32" fill="#19493e"><path d="M2 26C0 8 12-1 28 2v5C16 4 6 10 5 27zM13 14c7-5 15 0 15 6l-5 1 6 10-6-2-1-3-10 2z"/></svg>Michigan State Spartans (1-0)</li>
<li><span>15.</span><svg viewBox="0 0 32 32"><path d="M2 5h9l5 9 5-9h9v7h-3v8h3v6H19v-6h2v-5l-5 7-5-7v5h2v6H2v-6h3v-8H2z" fill="#f5cf13" stroke="#c5b777"/></svg>Michigan Wolverines (1-0)</li>
<li><span>16.</span><svg viewBox="0 0 32 32" fill="none" stroke="#a81c2d" stroke-width="4"><path d="M20 6C18 0 8 1 9 7c1 5 12 4 12 10 0 5-11 6-13-1M27 18c-2-6-12-5-12 4s10 10 13 2M20 2v6M27 14v6"/></svg>USC Trojans (0-1)</li>
<li><span>17.</span><svg viewBox="0 0 32 32"><circle cx="19" cy="14" r="11" fill="#eee" stroke="#777" stroke-width="2"/><path d="M15 8v7c0 6 9 6 9 0V8M12 8h6M21 8h6" fill="none" stroke="#d01b35" stroke-width="4"/><path d="M9 14L1 26M10 20L2 30" stroke="#888" stroke-width="3"/></svg>Utah Utes (1-0)</li>
<li><span>18.</span><svg viewBox="0 0 32 32"><circle cx="16" cy="16" r="14" fill="#fff" stroke="#7d2939" stroke-width="3"/><path d="M17 2C0 0-3 22 8 28l5 2 2-7-6-5 3-8z" fill="#171717"/><path d="M10 24l12 5 4-6-6 1-8-4z" fill="#cda87d"/><path d="M20 12l5 3-3 6" stroke="#333" fill="none"/></svg>Florida State Seminoles (0-1)</li>
<li><span>19.</span><svg viewBox="0 0 32 32"><path d="M2 8l8 4h12l8-4-7 7-4 2-1 8h-4l-1-8-4-2z" fill="#d8703b"/></svg>Texas Longhorns (1-0)</li>
<li><span>20.</span><svg viewBox="0 0 32 32"><path fill="#500a26" d="M0 0h32v32H0z"/><path d="M7 12V7h18v5M16 8v17M12 25h8M6 22l3-8 3 8M20 22v-8l3 4 3-4v8" fill="none" stroke="#fff" stroke-width="2"/></svg>Texas AM Aggies (1-0)</li>
<li><span>21.</span><svg viewBox="0 0 32 32"><path d="M6 8h8l2 5 3-5h8l2 12h2v4H21v-4h1l-1-4-5 8-5-8-1 4h2v4H1v-4h2z" fill="#b5462f"/></svg>Minnesota Golden Gophers (1-0)</li>
<li><span>22.</span><svg viewBox="0 0 32 32"><path d="M1 9h7l3 8 5-8h15l-1 3h-8l-5 11h-4l5-11h-2l-6 11H7z" fill="#7b3444"/></svg>Virginia Tech Hokies (1-0)</li>
<li><span>23.</span><svg viewBox="0 0 32 32"><path d="M29 9l-5-6H11L6 8v16l5 5h13l5-6" fill="none" stroke="#191919" stroke-width="5"/><path d="M12 9l6 3 3-3 8 1-4 6 3 6-9 1-8-4z" fill="#8b1d35"/></svg>South Carolina Gamecocks (0-1)</li>
<li><span>24.</span><svg viewBox="0 0 32 32"><path d="M24 11V8l-4-4h-6l-4 4v4l12 7v5l-3 4h-6l-4-4v-4" fill="none" stroke="#a7153b" stroke-width="6"/></svg>Stanford Cardinal (1-0)</li>
<li><span>25.</span><svg viewBox="0 0 32 32" fill="none" stroke="#f6b68c" stroke-width="2"><path d="M9 4l7 12 7-12M13 4l3 8 3-8M2 16l8 7 16 4M30 16l-8 7-16 4M3 24l6 4M29 24l-6 4"/></svg>Virginia Cavaliers (1-0)</li>
</ol>
</section>
<footer class="status">
  <strong>CINCINNATI BEARCATS</strong>
  <dl>
    <div><dt>RECORD :</dt><dd>(1-0)</dd></div>
    <div><dt>RANK :</dt><dd>#29</dd></div>
    <div><dt>PRESTIGE :</dt><dd>78</dd></div>
    <div><dt>RECRUIT CLASS RANK :</dt><dd>33</dd></div>
  </dl>
</footer>
</div>
</div>
</div>
</body>
</html>
```
FILE: styles.css
```css
:root {
  --gold: #c9b055;
  --slate: #33363b;
  --head: Oswald, "Roboto Condensed", "Liberation Sans", sans-serif;
  --mont: Montserrat, Inter, "Liberation Sans", sans-serif;
  --body: "Open Sans", "Noto Sans", sans-serif;
}
*, *::before, *::after { box-sizing: border-box; margin: 0; padding: 0; }
body { background: #fff; padding: 75px 112px 149px; font-family: var(--body); }
button { font: inherit; border: 0; background: none; color: inherit; }
a { color: inherit; text-decoration: none; }
ul, ol { list-style: none; }
svg { flex: none; display: block; }
.sr { position: absolute; width: 1px; height: 1px; overflow: hidden; clip-path: inset(50%); }

/* Host window */
.window { border-radius: 12px 12px 4px 4px; overflow: hidden; box-shadow: 0 0 2px rgba(0,0,0,.5), 0 40px 80px rgba(0,0,0,.5), 0 0 60px rgba(0,0,0,.12); }
.titlebar { height: 76px; padding: 2px 32px 0 26px; display: flex; align-items: center; background: linear-gradient(#e6e6e6, #c9c9c9); border-bottom: 2px solid #a2a2a2; border-top: 1px solid #f6f6f6; }
.lights { display: flex; gap: 16px; margin-right: 26px; }
.light { width: 24px; height: 24px; border-radius: 50%; border: 1px solid rgba(0,0,0,.15); }
.red { background: #ee6a5f; }
.amber { background: #f5bd4f; }
.green { background: #61c454; }
.tool, .toolgroup { height: 44px; border-radius: 8px; background: linear-gradient(#fdfdfd, #f1f1f1); box-shadow: 0 1px 2px rgba(0,0,0,.4); }
.tool { width: 56px; display: grid; place-items: center; margin-right: 16px; }
.tool svg, .toolgroup svg { fill: none; stroke: #4c4c4c; stroke-width: 2; }
.toolgroup { display: flex; margin-left: 80px; }
.toolgroup button { width: 70px; display: grid; place-items: center; border-right: 2px solid #dadada; }
.toolgroup .last { width: 30px; border: 0; }
.toolgroup .off svg { stroke: #b0b0b0; }
.wintitle { flex: 1; display: flex; justify-content: center; align-items: center; gap: 8px; padding-right: 130px; font: 400 26px Inter, "Liberation Sans", sans-serif; font-feature-settings: "calt" 0; color: #2b2b2b; }
.titlebar > .tool:last-child { margin-right: 0; }

/* Out-of-focus stadium backdrop */
.screen {
  padding: 171px 110px 173px;
  background:
    radial-gradient(circle 36px at 3316px 701px, #6b6d6a 0 32px, transparent 36px),
    radial-gradient(ellipse 60px 50px at 60px 200px, #4a4c4a, transparent),
    radial-gradient(ellipse 50px 60px at 36px 520px, #464846, transparent),
    radial-gradient(ellipse 260px 300px at 1010px 1660px, #4f4e49, transparent),
    radial-gradient(ellipse 420px 260px at 1850px 1640px, #494947, transparent),
    radial-gradient(ellipse 1300px 300px at 900px 1660px, #434547, transparent),
    linear-gradient(90deg, #363736, #2c2c2e 12%, #303135 40%, #313236 70%, #2a2a2c 92%, #353636);
}
.app { display: grid; grid-template-columns: 340px minmax(0, 1fr) 600px; grid-template-rows: 124px 80px 1fr 78px; background: var(--slate); color: #fff; }

/* Logo */
.brand { position: relative; overflow: hidden; background: #846e27; }
.brandart { position: absolute; inset: 0; width: 100%; height: 100%; }
.tagline, .cf { position: relative; display: flex; justify-content: center; }
.tagline { gap: 14px; padding: 6px 0 0 9px; font: 600 19px/24px "Exo 2", Inter, sans-serif; letter-spacing: 9px; color: #f4cf22; white-space: nowrap; }
.tagline b { color: #fff; font-weight: 600; }
.cf { margin-top: -10px; padding-right: 6px; font: italic 700 108px/94px "Exo 2", Lato, sans-serif; }
.cf span { padding-right: 10px; margin-right: -10px; background-clip: text; -webkit-background-clip: text; color: transparent; }
.cfa { font-weight: 600; background-image: linear-gradient(#d9c478 10%, #b0994a 90%); }
.cfb { background-image: linear-gradient(#fff 10%, #d4d4d6 90%); }

/* Left navigation */
.sidebar { grid-row: 2 / 5; display: flex; flex-direction: column; overflow: hidden; }
.season { padding: 1px 0 3px; text-align: center; }
.date { font: 600 20px/30px var(--mont); }
.phase { font: 500 30px/30px var(--mont); color: var(--gold); }
.advance { height: 38px; display: flex; align-items: center; justify-content: space-between; padding: 0 12px 0 8px; font: 500 24px/38px var(--mont); color: var(--gold); }
.sidebar h2 { height: 28px; display: flex; align-items: center; gap: 5px; padding-left: 22px; background: #484848; border: solid #515151; border-width: 2px 0; font: 600 22px/24px var(--mont); white-space: nowrap; }
.sidebar h2 svg { fill: none; stroke: #fff; stroke-width: 2; }
.sidebar h2.on { background: #b89c38; }
.sidebar ul { padding: 1px 0; background: linear-gradient(#4d4d4d, #4d4d4d) 38px 0 / 4px calc(100% - 12px) no-repeat; }
.sidebar li { height: 26px; padding-left: 38px; display: flex; align-items: center; gap: 6px; }
.sidebar li::before { content: ""; width: 42px; height: 4px; background: #4d4d4d; }
.sidebar li a { display: flex; align-items: center; gap: 9px; font: italic 700 19px/24px var(--head); }
.sidebar li a::before { content: ""; width: 18px; height: 18px; border: 4px solid #4d4d4d; border-radius: 50%; }
.sidebar li a.cur::before { border-color: #c9b055; }
.badge { width: 30px; height: 30px; margin: -3px 0 -3px 18px; border-radius: 50%; background: linear-gradient(#d6c272, #b39c45); text-align: center; font: 500 18px/29px var(--head); }
.teamlogo { margin: auto 0 0 114px; }

/* Top bar */
.toprow { display: flex; height: 66px; border-bottom: 2px solid var(--gold); }
.manager { width: 600px; padding-left: 24px; font: italic 500 32px/62px var(--head); color: var(--gold); }
.menu { width: 1000px; height: 40px; padding: 0 22px; display: flex; justify-content: space-between; align-items: center; background: #ceb65e; box-shadow: 6px 6px 8px rgba(0,0,0,.6); font: italic 700 28px/38px var(--head); }
.menu button { display: flex; align-items: center; gap: 7px; }
.menu b { font-style: normal; }
.menu svg { fill: none; stroke: #fff; stroke-width: 2; }
.opponent { display: flex; align-items: center; gap: 12px; padding-left: 8px; font: italic 500 32px/62px var(--head); }
.schools { position: relative; height: 58px; padding: 0 6px 4px; display: flex; align-items: center; }
.schools select { appearance: none; width: 280px; height: 42px; margin-right: 13px; padding: 0 6px; border: 2px solid #fff; border-radius: 0; font: 700 18px "Noto Sans", sans-serif; color: #3a3a44; background: linear-gradient(90deg, #e3e3e3 242px, #fff 242px 244px, #f0f0f0 244px); }
.schools::after { content: ""; position: absolute; left: 264px; top: 24px; border: solid transparent; border-width: 8px 5px 0; border-top-color: #000; }
.schools a { width: 62px; display: grid; place-items: center; }
.lg { font-family: Oswald, sans-serif; font-weight: 700; text-anchor: middle; }
.lw { font-family: Montserrat, sans-serif; font-weight: 800; text-anchor: middle; }
.li { font-family: "Liberation Serif", serif; font-style: italic; font-weight: 700; text-anchor: middle; }
.studio { display: flex; align-items: center; justify-content: center; font: 600 51px/64px var(--mont); }
.studio span { background-clip: text; -webkit-background-clip: text; color: transparent; }
.wol { background-image: linear-gradient(#fff 30%, #cfcfcf 75%); }
.stu { background-image: linear-gradient(#ffdc33 30%, #d0a60c 75%); }

/* Page title */
.band { display: flex; align-items: center; padding: 0 4px 0 11px; background: linear-gradient(90deg, #cbb257 20%, #decd8f); }
.band h1 { margin-left: 16px; flex: 1; font: 700 61px/80px Jost, Lato, sans-serif; white-space: nowrap; }
.ghost { font: italic 600 64px/80px "Exo 2", Lato, sans-serif; color: #d3bf76; }
.ghost b { font-weight: 700; color: #e4d8a8; }
.rtitle { background: var(--gold); text-align: center; font: 600 61px/76px Barlow, "Open Sans", sans-serif; letter-spacing: 6px; padding-left: 4px; white-space: nowrap; }

/* Media tabs */
.main { background: #ebebeb; display: flex; flex-direction: column; }
.tabs { height: 72px; margin: 0 14px 0 174px; padding: 0 5px 4px 19px; background: var(--slate); border-radius: 0 0 12px 12px; display: flex; align-items: center; justify-content: space-between; font: 800 25px/40px Jost, Lato, sans-serif; color: var(--gold); white-space: nowrap; }
.tabs a, .select { display: flex; align-items: center; gap: 3px; }
.tabs .top25 { font-size: 26px; }
.tabs .select { gap: 8px; color: #fff; font: italic 700 42px/60px var(--head); }
.select i { border: solid transparent; border-width: 6px 0 6px 9px; border-left-color: var(--gold); }
.num { font: 500 34px/40px var(--head); margin-right: 6px; }
.tabs svg { fill: none; stroke: var(--gold); stroke-width: 3; }
.tabs .f { fill: var(--gold); stroke: none; }

/* Report panel */
.frame { flex: 1; contain: size; margin: 40px 50px 48px; display: flex; overflow: hidden; background: #eee; box-shadow: 4px 7px 6px -1px rgba(0,0,0,.85); }
.sheet { flex: 1; margin: 16px 16px 0; padding: 12px 12px 0; background: #fff; display: grid; grid-template-columns: 1fr 1fr; gap: 12px; align-items: start; overflow: hidden; }
table { border-collapse: separate; border-spacing: 0; width: 100%; color: #4c4c4c; font: 400 24px/30px var(--body); }
th { height: 48px; padding: 0 7px; text-align: left; background: #333; color: #fff; border: solid #ededed; border-width: 2px 0; font-size: 23px; }
td { height: 42px; padding: 0 4px; border-bottom: 2px solid #ededed; white-space: nowrap; }
tbody tr:nth-child(3n+1) td { height: 44px; }
tbody tr:nth-child(even) td { background: #fbfbfb; }
td a { text-decoration: underline 2px; text-underline-offset: 3px; text-decoration-skip-ink: none; }
.scroll { width: 34px; background: #f0f0f0; display: flex; flex-direction: column; align-items: center; }
.scroll button { height: 68px; padding-top: 16px; }
.scroll svg { fill: none; stroke: #606060; stroke-width: 4; }
.scroll button:last-child { padding: 0 0 18px; }
.track { flex: 1; width: 30px; }
.thumb { height: 69%; background: #cdcdcd; }

/* Rankings */
.ranks { background: #ebebeb; color: #111; padding: 33px 0 37px; }
.ranks ol { background: linear-gradient(#b3b3b3, #b3b3b3) 10px 23px / 6px calc(100% - 42px) no-repeat; }
.ranks li { height: 42px; padding-left: 34px; display: flex; align-items: center; font-size: 22px; line-height: 30px; }
.ranks li span { width: 56px; }
.ranks li svg { width: 32px; height: 32px; margin-right: 34px; }

/* Status bar */
.status { grid-column: 2 / 4; display: flex; align-items: center; padding: 0 0 8px 3px; }
.status strong { width: 861px; font: italic 500 39px/70px var(--head); }
.status dl { display: flex; gap: 52px; }
.status dl div { display: flex; align-items: center; gap: 20px; }
.status dl div:first-child dd { min-width: 94px; }
.status dt { font: italic 700 32px/70px var(--head); }
.status dd { font: italic 400 34px/70px var(--head); }
```
